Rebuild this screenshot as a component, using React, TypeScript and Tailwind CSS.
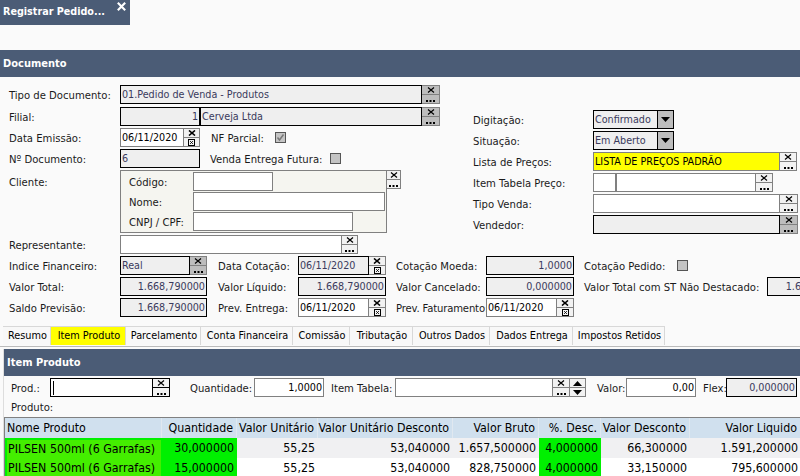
import type { ReactNode } from "react"

const dark = "border-black bg-[#efefef] text-[#3a3a5c]"
const light = "border-[#808080] bg-white text-black"

function Label({ w, children, className = "" }: { w: number; children: ReactNode; className?: string }) {
  return (
    <span className={`shrink-0 whitespace-nowrap pt-[2px] text-[#1a1a1a] ${className}`} style={{ width: w }}>
      {children}
    </span>
  )
}

function Cross({ bold = false }: { bold?: boolean }) {
  return (
    <svg width="8" height="6" viewBox="0 0 8 6" className="block">
      <path d="M1 0.5 L7 5.5 M7 0.5 L1 5.5" stroke="#000" strokeWidth={bold ? 1.6 : 1.2} fill="none" />
    </svg>
  )
}

function Dots() {
  return (
    <svg width="9" height="3" viewBox="0 0 9 3" className="mt-[2px] block">
      <path d="M0 1h2v2H0zM3.5 1h2v2h-2zM7 1h2v2H7z" fill="#000" />
    </svg>
  )
}

function Calendar() {
  return (
    <svg width="7" height="7" viewBox="0 0 7 7" className="block">
      <rect x="0.5" y="0.5" width="6" height="6" fill="none" stroke="#000" />
      <path d="M2 2 L5 5 M5 2 L2 5" stroke="#000" strokeWidth="0.8" />
    </svg>
  )
}

// stacked X / ... button at the end of a lookup field
function LookupBtn({ dim = false, w = 17 }: { dim?: boolean; w?: number }) {
  const bg = dim ? "bg-[#bdbdbd]" : "bg-[#f2f2f2]"
  return (
    <div className="flex shrink-0 flex-col border border-l-0 border-[#808080]" style={{ width: w }}>
      <div className={`flex flex-1 items-center justify-center border-b border-[#808080] ${bg}`}>
        <Cross />
      </div>
      <div className={`flex flex-1 items-center justify-center ${bg}`}>
        <Dots />
      </div>
    </div>
  )
}

function DateBtn({ w = 17 }: { w?: number }) {
  return (
    <div className="flex shrink-0 flex-col border border-l-0 border-[#808080] bg-[#f2f2f2]" style={{ width: w }}>
      <div className="flex flex-1 items-center justify-center border-b border-[#808080]">
        <Cross bold />
      </div>
      <div className="flex flex-1 items-center justify-center">
        <Calendar />
      </div>
    </div>
  )
}

function Field({
  w,
  value = "",
  off = false,
  right = false,
  bg = "",
}: {
  w: number
  value?: string
  off?: boolean
  right?: boolean
  bg?: string
}) {
  return (
    <div
      className={`flex h-full shrink-0 items-center overflow-hidden whitespace-nowrap border px-[1px] pt-[1px] text-[10.7px] ${off ? dark : light} ${right ? "justify-end" : ""} ${bg}`}
      style={{ width: w }}
    >
      {value}
    </div>
  )
}

function Lookup({ w, value = "", off = false, btn = 18 }: { w: number; value?: string; off?: boolean; btn?: number }) {
  return (
    <div className="flex h-full shrink-0">
      <Field w={w} value={value} off={off} />
      <LookupBtn dim={off} w={btn} />
    </div>
  )
}

function DateField({ value, w = 71, btn = 17 }: { value: string; w?: number; btn?: number }) {
  return (
    <div className="flex h-full shrink-0">
      <Field w={w} value={value} />
      <DateBtn w={btn} />
    </div>
  )
}

function Combo({ value }: { value: string }) {
  return (
    <div className="flex h-full shrink-0">
      <Field w={65} value={value} off />
      <div className="flex w-[16px] items-center justify-center border border-l-0 border-black bg-[#bdbdbd]">
        <svg width="9" height="5" viewBox="0 0 9 5">
          <path d="M0 0h9L4.5 5z" fill="#000" />
        </svg>
      </div>
    </div>
  )
}

function Check({ checked = false }: { checked?: boolean }) {
  return (
    <span className="flex h-[11px] w-[11px] shrink-0 items-center justify-center border border-[#555] bg-[#c4c4c4]">
      {checked && (
        <svg width="9" height="9" viewBox="0 0 9 9">
          <path d="M1.5 4.5 L3.5 7 L7.5 1.5" stroke="#777" strokeWidth="1.5" fill="none" />
        </svg>
      )}
    </span>
  )
}

const tabs = [
  ["Resumo", 48],
  ["Item Produto", 75],
  ["Parcelamento", 75],
  ["Conta Financeira", 92],
  ["Comissão", 57],
  ["Tributação", 63],
  ["Outros Dados", 77],
  ["Dados Entrega", 83],
  ["Impostos Retidos", 92],
] as const

const columns = ["Nome Produto", "Quantidade", "Valor Unitário", "Valor Unitário Desconto", "Valor Bruto", "%. Desc.", "Valor Desconto", "Valor Liquido"]

const rows = [
  ["PILSEN 500ml (6 Garrafas)", "30,000000", "55,25", "53,040000", "1.657,500000", "4,000000", "66,300000", "1.591,200000"],
  ["PILSEN 500ml (6 Garrafas)", "15,000000", "55,25", "53,040000", "828,750000", "4,000000", "33,150000", "795,600000"],
]

const gridCols = "grid grid-cols-[157px_75px_81px_135px_86px_62px_89px_111px]"

export default function App() {
  return (
    <div
      className="h-[476px] w-[800px] overflow-hidden bg-[#fafafa] text-[11.2px] leading-none"
      style={{ fontFamily: '"DejaVu Sans Condensed", "DejaVu Sans", sans-serif' }}
    >
      <div className="relative flex h-[25px] w-[130px] items-center bg-[#4b5c76] pl-[3px] text-[10.7px] font-bold text-white">
        Registrar Pedido...
        <svg width="9" height="9" viewBox="0 0 11 11" className="absolute left-[117px] top-[2px]">
          <path d="M1 1 L10 10 M10 1 L1 10" stroke="#fff" strokeWidth="2.6" />
        </svg>
      </div>

      <div className="mt-[25px] flex h-[27px] items-center bg-[#4b5c76] pl-[3px] text-[11px] font-bold text-white">Documento</div>

      <div className="flex pl-[9px] pt-[8px]">
        <div className="w-[391px]">
          <div className="flex h-[19px] items-center">
            <Label w={111}>Tipo de Documento:</Label>
            <Lookup w={302} value="01.Pedido de Venda - Produtos" off />
          </div>
          <div className="mt-[3px] flex h-[19px] items-center">
            <Label w={111}>Filial:</Label>
            <Field w={80} value="1" off right />
            <Lookup w={222} value="Cerveja Ltda" off />
          </div>
          <div className="mt-[2px] flex h-[19px] items-center">
            <Label w={111}>Data Emissão:</Label>
            <DateField value="06/11/2020" w={64} btn={16} />
            <Label w={64} className="ml-[11px]">NF Parcial:</Label>
            <Check checked />
          </div>
          <div className="mt-[2px] flex h-[19px] items-center">
            <Label w={111}>Nº Documento:</Label>
            <Field w={80} value="6" off />
            <Label w={120} className="ml-[10px]">Venda Entrega Futura:</Label>
            <Check />
          </div>
          <div className="mt-[2px] flex h-[63px] items-start">
            <Label w={111} className="mt-[5px]">Cliente:</Label>
            <div className="flex h-[63px] w-[267px] shrink-0 flex-col gap-[1px] border border-[#808080] bg-[#f5f5f0] pl-[8px] pt-[1px]">
              <div className="flex h-[19px] items-center">
                <Label w={64}>Código:</Label>
                <Field w={80} />
              </div>
              <div className="flex h-[19px] items-center">
                <Label w={64}>Nome:</Label>
                <Field w={192} />
              </div>
              <div className="flex h-[19px] items-center">
                <Label w={64}>CNPJ / CPF:</Label>
                <Field w={160} />
              </div>
            </div>
            <div className="flex h-[19px]">
              <LookupBtn w={14} />
            </div>
          </div>
          <div className="mt-[2px] flex h-[19px] items-center">
            <Label w={111}>Representante:</Label>
            <Lookup w={222} btn={16} />
          </div>
        </div>

        <div className="ml-[73px] pt-[25px]">
          <div className="flex h-[19px] items-center">
            <Label w={120}>Digitação:</Label>
            <Combo value="Confirmado" />
          </div>
          <div className="mt-[2px] flex h-[19px] items-center">
            <Label w={120}>Situação:</Label>
            <Combo value="Em Aberto" />
          </div>
          <div className="mt-[2px] flex h-[19px] items-center">
            <Label w={120}>Lista de Preços:</Label>
            <div className="flex h-full">
              <Field w={187} value="LISTA DE PREÇOS PADRÃO" bg="!bg-[#ffff00] !text-black" />
              <LookupBtn />
            </div>
          </div>
          <div className="mt-[2px] flex h-[19px] items-center">
            <Label w={120}>Item Tabela Preço:</Label>
            <Field w={23} />
            <Lookup w={140} btn={17} />
          </div>
          <div className="mt-[2px] flex h-[19px] items-center">
            <Label w={120}>Tipo Venda:</Label>
            <Lookup w={187} />
          </div>
          <div className="mt-[2px] flex h-[19px] items-center">
            <Label w={120}>Vendedor:</Label>
            <Lookup w={187} off />
          </div>
        </div>
      </div>

      <div className="mt-[2px] flex h-[19px] items-center pl-[9px]">
        <Label w={111}>Indice Financeiro:</Label>
        <Lookup w={70} value="Real" off btn={17} />
        <Label w={80} className="ml-[11px]">Data Cotação:</Label>
        <div className="flex h-full">
          <Field w={71} value="06/11/2020" off />
          <DateBtn />
        </div>
        <Label w={90} className="ml-[10px]">Cotação Moeda:</Label>
        <Field w={88} value="1,0000" off right />
        <Label w={93} className="ml-[10px]">Cotação Pedido:</Label>
        <Check />
      </div>
      <div className="mt-[2px] flex h-[19px] items-center pl-[9px]">
        <Label w={111}>Valor Total:</Label>
        <Field w={87} value="1.668,790000" off right />
        <Label w={80} className="ml-[11px]">Valor Líquido:</Label>
        <Field w={88} value="1.668,790000" off right />
        <Label w={90} className="ml-[10px]">Valor Cancelado:</Label>
        <Field w={88} value="0,000000" off right />
        <Label w={183} className="ml-[10px]">Valor Total com ST Não Destacado:</Label>
        <Field w={88} value="1.668,790000" off right />
      </div>
      <div className="mt-[2px] flex h-[19px] items-center pl-[9px]">
        <Label w={111}>Saldo Previsão:</Label>
        <Field w={87} value="1.668,790000" off right />
        <Label w={80} className="ml-[11px]">Prev. Entrega:</Label>
        <DateField value="06/11/2020" />
        <Label w={90} className="ml-[10px] tracking-[-0.15px]">Prev. Faturamento:</Label>
        <DateField value="06/11/2020" />
      </div>

      <div className="ml-[3px] mt-[9px] flex h-[19px] text-[10.8px]">
        {tabs.map(([name, w]) => (
          <div
            key={name}
            className={`flex items-center justify-center whitespace-nowrap border-r border-t border-[#d8d8d8] pl-[2px] pt-[1px] ${name === "Item Produto" ? "bg-[#ffff00]" : "bg-[#f8f8f8]"}`}
            style={{ width: w }}
          >
            {name}
          </div>
        ))}
      </div>

      <div className="mt-[1px] h-[3px] border-t border-[#bbb]" />

      <div className="ml-[3px] border-l border-[#ddd]">
        <div className="flex h-[27px] items-center bg-[#4b5c76] pl-[3px] text-[11px] font-bold text-white">Item Produto</div>

        <div className="mt-[2px] flex h-[19px] items-center">
          <Label w={39} className="ml-[7px]">Prod.:</Label>
          <div className="flex h-full">
            <div className="flex w-[103px] items-center border border-black bg-white pl-[2px]">
              <span className="h-[14px] w-[1px] bg-black" />
            </div>
            <div className="flex w-[17px] flex-col border border-l-0 border-black bg-[#f2f2f2]">
              <div className="flex flex-1 items-center justify-center border-b border-black">
                <Cross />
              </div>
              <div className="flex flex-1 items-center justify-center">
                <Dots />
              </div>
            </div>
          </div>
          <Label w={64} className="ml-[20px]">Quantidade:</Label>
          <Field w={70} value="1,0000" right />
          <Label w={64} className="ml-[7px]">Item Tabela:</Label>
          <div className="flex h-full">
            <Field w={158} />
            <LookupBtn />
            <div className="flex w-[16px] flex-col border border-l-0 border-[#808080] bg-[#f2f2f2]">
              <div className="flex flex-1 items-center justify-center border-b border-[#808080]">
                <svg width="9" height="5" viewBox="0 0 9 5">
                  <path d="M0 5h9L4.5 0z" fill="#000" />
                </svg>
              </div>
              <div className="flex flex-1 items-center justify-center">
                <svg width="9" height="5" viewBox="0 0 9 5">
                  <path d="M0 0h9L4.5 5z" fill="#000" />
                </svg>
              </div>
            </div>
          </div>
          <Label w={29} className="ml-[11px]">Valor:</Label>
          <Field w={70} value="0,00" right />
          <Label w={23} className="ml-[7px]">Flex:</Label>
          <Field w={71} value="0,000000" off right />
        </div>

        <div className="flex h-[20px] items-center pl-[7px] pt-[2px] text-[#1a1a1a]">Produto:</div>

        <div className="border-t border-[#808080] text-[12.3px]">
          <div className={`${gridCols} h-[20px] border-l border-[#808080] bg-[#d0e0ee]`}>
            {columns.map((c, i) => (
              <div key={c} className={`flex items-center whitespace-nowrap border-r border-[#e0e8f0] pr-[3px] ${i === 0 ? "pl-[2px]" : "justify-end"}`}>
                {c}
              </div>
            ))}
          </div>
          {rows.map((row, r) => (
            <div key={r} className={`${gridCols} h-[20px] border-l border-[#808080] ${r === 0 ? "bg-[#f0f0f2]" : "bg-white"}`}>
              {row.map((v, i) => (
                <div
                  key={i}
                  className={`flex items-center whitespace-nowrap pr-[3px] ${i === 0 ? `border-l-2 border-r border-[#00f000] bg-[#44ee00] pl-[1px] ${r === 0 ? "border-t-2" : ""}` : "justify-end"} ${i === 1 || i === 5 ? "bg-[#00f000]" : ""}`}
                >
                  {v}
                </div>
              ))}
            </div>
          ))}
        </div>
      </div>
    </div>
  )
}
